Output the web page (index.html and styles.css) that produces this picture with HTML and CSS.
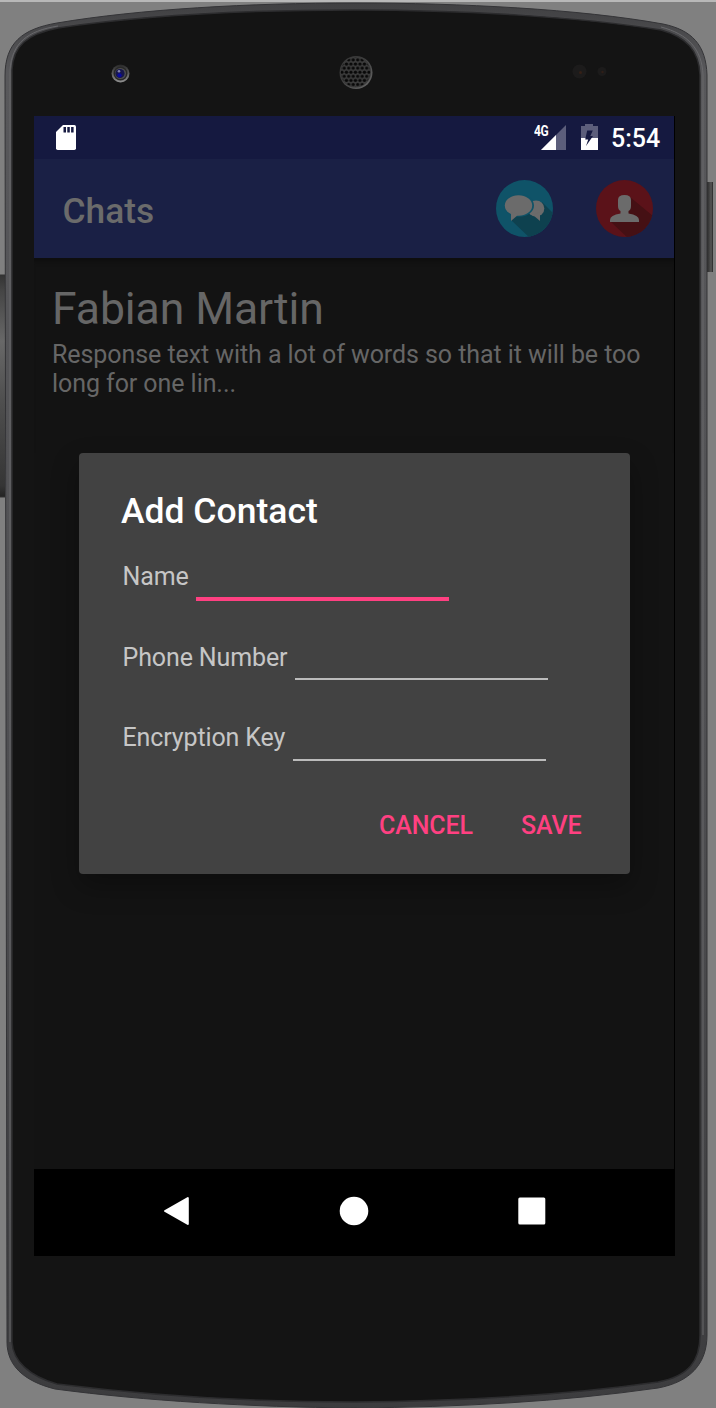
FILE: index.html
```html
<!DOCTYPE html>
<html lang="en">
<head>
<meta charset="utf-8">
<title>Chats</title>
<link rel="stylesheet" href="styles.css">
</head>
<body>
<div class="device">
  <svg class="frame" viewBox="0 0 716 1408" aria-hidden="true">
    <defs>
      <linearGradient id="rim" x1="0" y1="0" x2="0" y2="1"><stop offset="0" stop-color="#404042"/><stop offset=".05" stop-color="#58585b"/><stop offset=".5" stop-color="#505053"/><stop offset="1" stop-color="#3c3c3e"/></linearGradient>
      <linearGradient id="key" x1="0" y1="0" x2="0" y2="1"><stop offset="0" stop-color="#333"/><stop offset=".07" stop-color="#454545"/><stop offset=".3" stop-color="#686868"/><stop offset=".55" stop-color="#505050"/><stop offset=".95" stop-color="#353535"/><stop offset="1" stop-color="#222"/></linearGradient>
      <linearGradient id="power" x1="0" y1="0" x2="1" y2="0"><stop offset="0" stop-color="#292929"/><stop offset=".7" stop-color="#555"/><stop offset="1" stop-color="#252525"/></linearGradient>
      <linearGradient id="lens" x1="0" y1="0" x2="0" y2="1"><stop offset="0" stop-color="#292929"/><stop offset="1" stop-color="#909090"/></linearGradient>
      <linearGradient id="grille" x1="0" y1="0" x2="1" y2="1"><stop offset="0" stop-color="#252525"/><stop offset="1" stop-color="#686868"/></linearGradient>
      <pattern id="holes" width="4.5" height="8.2" patternUnits="userSpaceOnUse" x="353.2" y="70.2"><circle cx="2.25" cy="2.05" r="1.65" fill="#080808"/><circle cx="0" cy="6.15" r="1.65" fill="#080808"/><circle cx="4.5" cy="6.15" r="1.65" fill="#080808"/></pattern>
    </defs>
    <path d="M0 1H716" stroke="#b8b8b8" stroke-width="2"/>
    <path d="M0 275H5V497H0Z" fill="url(#key)"/>
    <path d="M0 275H5M0 497H5" stroke="#333" stroke-width="1"/>
    <path d="M707 182H713V272H707Z" fill="url(#power)"/>
    <path class="rim" fill="url(#rim)" d="M5 76C5 43 22 29 57 23C140 9 250 3 355 3C460 3 580 9 663 24C692 30 706 45 707 75V1335C707 1364 690 1382 658 1388C560 1402 460 1407 355 1408C250 1407 145 1401 55 1389C23 1381 7 1365 7 1342Z"/>
    <path fill="#141414" stroke="#2c2c2e" stroke-width="1.5" d="M12 70C13 46 27 34 58 28C145 15 250 10 355 10C465 10 580 17 661 30C686 37 699 50 700 75V1335C700 1361 689 1376 658 1382C560 1396 460 1401 355 1402C250 1402 145 1395 57 1384C29 1376 13 1361 12 1342Z"/>
    <path fill="none" stroke="#68686b" stroke-width="1" d="M10 1342V70C12 43 27 31 58 26M661 27C688 34 702 49 703 75V1335"/>
    <circle cx="120.5" cy="73.5" r="9" fill="url(#lens)"/><circle cx="120.5" cy="73.5" r="7" fill="#292929"/><circle cx="120.5" cy="73.5" r="5.5" fill="#505050"/><circle cx="120" cy="73.5" r="4.6" fill="#17174c"/><circle cx="119.5" cy="75.3" r="2.1" fill="#0909a0"/><circle cx="119" cy="71.2" r="1.3" fill="#8080ab"/>
    <circle cx="356" cy="72.5" r="16.5" fill="url(#grille)"/><circle cx="355.5" cy="72" r="15.5" fill="#3b3b3b"/><circle cx="355.5" cy="72.2" r="14.7" fill="url(#holes)"/>
    <circle cx="579.5" cy="71.5" r="7" fill="#1c1b1b"/><circle cx="580.5" cy="72.5" r="1.5" fill="#352017"/><circle cx="602" cy="71.5" r="4.5" fill="#1c1b1b"/><circle cx="602.5" cy="72" r="1.2" fill="#301e17"/>
  </svg>
  <main class="screen">
    <header class="status">
      <svg class="sd" viewBox="0 0 20 25"><path fill="#fff" d="M7 0H18.3Q20 0 20 1.7V23.3Q20 25 18.3 25H1.7Q0 25 0 23.3V7Z"/><path fill="#151940" d="M7.5 2H10V7.5H7.5ZM11.3 2H13.8V7.5H11.3ZM15.1 2H17.6V7.5H15.1Z"/></svg>
      <div class="status-right">
        <div class="signal"><span class="network">4G</span><svg class="bars" viewBox="0 0 25 25"><path fill="#5c5e7b" d="M25 0V25H0Z"/><path fill="#fff" d="M15 10V25H0Z"/></svg></div>
        <svg class="battery" viewBox="0 0 17 26"><path fill="#5c5e7b" d="M0 2H4V0H12V2H17V26H0Z"/><path fill="#fff" d="M0 14H17V26H0Z"/><path fill="#151940" d="M6.2 6.5H11.8L9.3 12H12L5 22L7.2 15.5H4.2Z"/></svg>
        <span class="time">5:54</span>
      </div>
    </header>
    <div class="appbar">
      <h1 class="app-title">Chats</h1>
      <div class="actions">
        <svg class="action" viewBox="0 0 57 57">
          <defs><clipPath id="disc"><circle cx="28.5" cy="28.5" r="28.5"/></clipPath></defs>
          <g clip-path="url(#disc)"><path fill="#0f5368" d="M0 0H57V57H0Z"/><path fill="#0e414f" d="M46 22L59 35V60H36L15 40L23 30L43 38Z"/></g>
          <ellipse cx="40" cy="28.5" rx="8.3" ry="8" fill="#6b6b6b"/><path fill="#6b6b6b" d="M44 32V41L37 35Z"/>
          <ellipse cx="23" cy="25.5" rx="15" ry="11.3" fill="#0f5368"/><ellipse cx="22.5" cy="25.5" rx="13.7" ry="10.3" fill="#6b6b6b"/><path fill="#6b6b6b" d="M15 32V41L23 34Z"/>
        </svg>
        <svg class="action" viewBox="0 0 57 57">
          <g clip-path="url(#disc)"><path fill="#5b1219" d="M0 0H57V57H0Z"/><path fill="#451014" d="M34 17L57 36V60H34L14 41L28 32Z"/></g>
          <path fill="#6b6b6b" d="M22 20Q22 15 28.5 15Q35 15 35 20V26Q35 30 32.5 31V33.5Q43 35 43 40V42H14V40Q14 35 24.5 33.5V31Q22 30 22 26Z"/>
        </svg>
      </div>
    </div>
    <section class="chat"><h2 class="person">Fabian Martin</h2><p class="message">Response text with a lot of words so that it will be too<br>long for one lin...</p></section>
    <section class="dialog" role="dialog" aria-labelledby="dialog-title">
      <h2 class="dialog-title" id="dialog-title">Add Contact</h2>
      <div class="fields">
        <label class="field"><span class="label name">Name</span><input class="line focused"></label>
        <label class="field"><span class="label phone">Phone Number</span><input class="line"></label>
        <label class="field"><span class="label crypt">Encryption Key</span><input class="line"></label>
      </div>
      <div class="buttons"><button class="button cancel">CANCEL</button><button class="button save">SAVE</button></div>
    </section>
    <nav class="nav">
      <svg class="nav-icon" viewBox="0 0 30 30"><path fill="#fff" stroke="#fff" stroke-width="2" stroke-linejoin="round" d="M4 15L26.8 2V28Z"/></svg>
      <svg class="nav-icon" viewBox="0 0 30 30"><circle cx="15" cy="15" r="14.3" fill="#fff"/></svg>
      <svg class="nav-icon" viewBox="0 0 30 30"><rect x="1.3" y="1.5" width="27" height="27" rx="1.5" fill="#fff"/></svg>
    </nav>
  </main>
</div>
</body>
</html>
```
FILE: styles.css
```css
* { box-sizing: border-box; }
body { margin: 0; font-family: Roboto, sans-serif; background: #808080; overflow: hidden; }
h1, h2, p { margin: 0; }
svg { display: block; }
.device { position: relative; width: 716px; height: 1408px; padding: 116px 41px 0 34px; }
.frame { position: absolute; top: 0; left: 0; width: 716px; height: 1408px; }
.rim { stroke: #343437; stroke-width: 1px; }
.screen { position: relative; display: flex; flex-direction: column; width: 641px; height: 1140px; background: #131313; border-right: 1px solid #000; }
.status { display: flex; justify-content: space-between; height: 43px; padding: 9px 14px 0 22px; background: #151940; }
.sd { width: 20px; height: 25px; }
.status-right { display: flex; }
.signal { display: flex; width: 32px; margin-right: 15px; }
.network { width: 7px; font-size: 15px; line-height: 13px; font-weight: 700; color: #fff; letter-spacing: -.4px; white-space: nowrap; transform: scaleX(.8); transform-origin: 0 0; }
.bars { width: 25px; height: 25px; flex: none; }
.battery { width: 17px; height: 26px; margin-right: 13px; margin-top: -1px; }
.time { width: 49px; font-size: 25px; line-height: 28px; font-weight: 500; color: #fff; }
.appbar { display: flex; justify-content: space-between; align-items: center; height: 99px; padding: 0 21px 0 28.5px; background: #1a2045; }
.app-title { padding-top: 4px; font-size: 35.3px; line-height: 42px; font-weight: 500; color: #6b6b6b; }
.actions { display: flex; gap: 43px; }
.action { width: 57px; height: 57px; }
.chat { height: 195px; padding: 23px 18px 0; box-shadow: inset 0 7px 6px -6px #0b0b0b; color: #666; }
.person { font-size: 44.5px; line-height: 56px; font-weight: 400; letter-spacing: -.08px; }
.message { padding-top: 3px; font-size: 25px; line-height: 29px; white-space: nowrap; letter-spacing: -.07px; }
.dialog { width: 551px; height: 421px; margin-left: 44.5px; padding: 37px 43px 0 42.5px; background: #424242; border-radius: 4px; box-shadow: 0 12px 28px rgba(0, 0, 0, .3); }
.dialog-title { font-size: 35.5px; line-height: 42px; font-weight: 500; color: #fff; }
.fields { padding: 27px 1px 0 1.5px; }
.field { display: flex; height: 80.5px; }
.label { font-size: 25px; line-height: 36px; color: #c6c6c6; white-space: nowrap; letter-spacing: -.12px; }
.name { width: 73px; }
.phone { width: 172px; }
.crypt { width: 170px; }
.line { width: 253px; height: 40.5px; padding: 0; border: 0; border-bottom: 2px solid #bbb; border-radius: 0; outline: 0; background: transparent; }
.focused { height: 42px; border-bottom: 4px solid #ff4081; }
.buttons { display: flex; justify-content: flex-end; gap: 48px; padding: 10px 5px 0 0; }
.button { padding: 0; border: 0; background: transparent; color: #ff4081; font: 500 25px/30px Roboto, sans-serif; letter-spacing: -.1px; }
.nav { display: flex; justify-content: center; align-items: center; gap: 148px; height: 87px; margin-top: auto; background: #000; padding-bottom: 3px; }
.nav-icon { width: 30px; height: 30px; }
```
